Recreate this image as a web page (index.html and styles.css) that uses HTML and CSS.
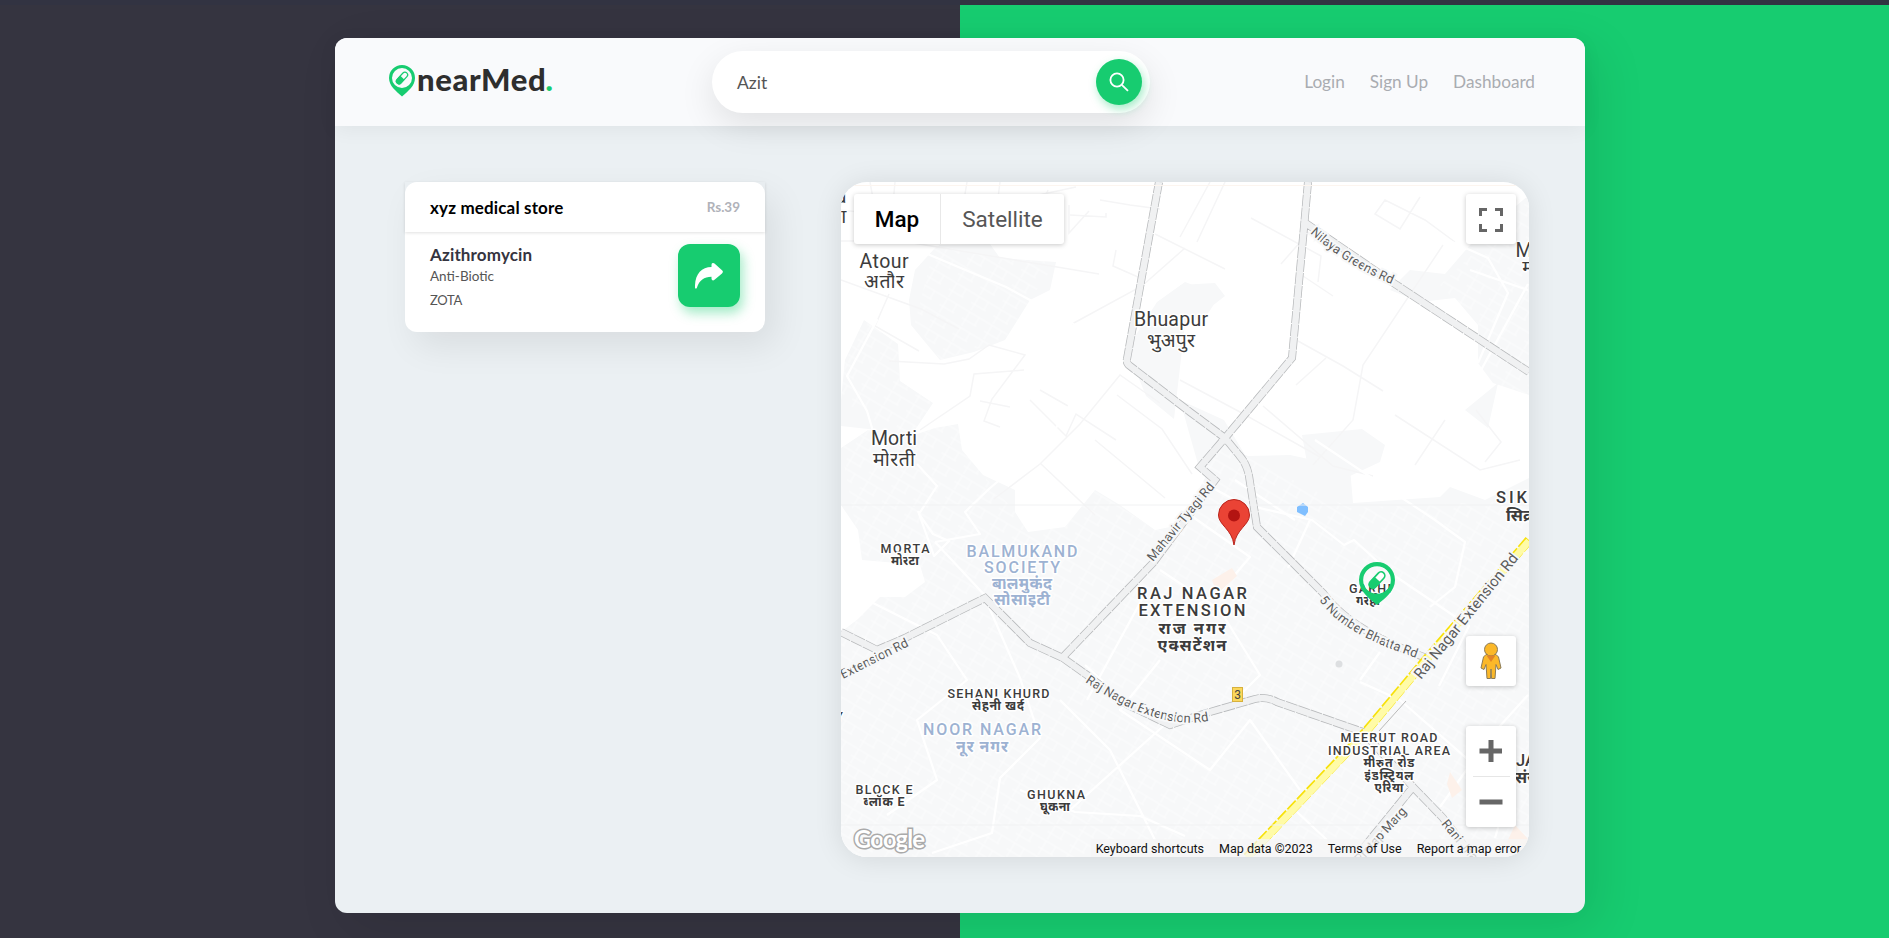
FILE: index.html
```html
<!DOCTYPE html>
<html lang="en">
<head>
<meta charset="utf-8">
<title>nearMed</title>
<link rel="stylesheet" href="styles.css">
</head>
<body>
<div class="page">
<div class="panel">
  <header class="header">
    <a class="logo">
      <svg class="logo-pin" viewBox="0 0 26 32"><path fill="#17cc70" fill-rule="evenodd" d="M13 0a13 13 0 0 1 13 13c0 8-7 13-13 18.500C7 26 0 21 0 13A13 13 0 0 1 13 0zm0 3a10 10 0 1 0 0 20a10 10 0 0 0 0-20z"/><g transform="rotate(43 13 13)"><rect x="10.300" y="6" width="5.400" height="14" rx="2.700" fill="#f9fafc" stroke="#17cc70" stroke-width="1.200"/><path fill="#17cc70" d="M10 12.500h6v5a3 3 0 0 1-6 0z"/></g></svg>
      <span class="logo-text">nearMed<span class="dot">.</span></span>
    </a>
    <div class="search">
      <span class="query">Azit</span>
      <button class="search-btn"><svg viewBox="0 0 20 20" width="20" height="20" fill="none" stroke="#fff" stroke-width="1.800"><circle cx="8" cy="8" r="6.600"/><path d="M12.800 12.800l6.200 6"/></svg></button>
    </div>
    <nav class="nav"><a>Login</a><a>Sign Up</a><a>Dashboard</a></nav>
  </header>
  <main class="main">
    <section class="card">
      <div class="card-head"><h2>xyz medical store</h2><span class="price">Rs.39</span></div>
      <div class="card-body">
        <div class="info"><h3>Azithromycin</h3><p class="kind">Anti-Biotic</p><p class="brand">ZOTA</p></div>
        <button class="go"><svg viewBox="0 0 28 26" width="28" height="26"><path fill="#fff" d="M0 25C-.5 12 6 4 16.500 4V2c0-2 1.500-2.600 3-1.400l7.500 6.600c1.200 1.100 1.200 2 0 3.200l-7.500 6.400c-1.500 1.300-3 .5-3-1.200v-1.800C9 14 4.500 17 1.800 25c-.4.700-1.600.7-1.800 0z"/></svg></button>
      </div>
    </section>
    <section class="map">
      <svg class="canvas" viewBox="841 182 688 675">
        <defs>
          <pattern id="grid" width="26" height="18" patternUnits="userSpaceOnUse" patternTransform="rotate(31)"><path d="M0 2H26M4 2V18M15 2V11M0 11H17" fill="none" stroke="#fff" stroke-width="1"/></pattern>
          <path id="nilaya" d="M1310 233Q1345 265 1394 285"/>
          <path id="mahavir" d="M1153 562L1219 482"/>
          <path id="bhatta" d="M1319 600C1342 632 1382 646 1422 660"/>
          <path id="rajext" d="M1085 682Q1160 733 1212 720"/>
          <path id="rajyellow" d="M1421 680L1524 552"/>
          <path id="extension" d="M843 679L917 642"/>
          <path id="marg" d="M1360 864L1418 800"/>
          <path id="rani" d="M1441 824L1482 874"/>
        </defs>
        <rect x="841" y="182" width="688" height="675" fill="#fff"/>
        <g id="areas" fill="#f7f8f9">
          <path id="town" d="M841 448L868 430 917 434 935 428 958 424 962 450 983 475 1015 490 1015 512 1028 532 1065 527 1095 490 1120 505 1155 530 1180 525 1205 478 1222 445 1248 456 1290 455 1350 468 1353 503 1440 497 1450 487 1485 500 1529 478V857H841V632L858 619 880 597 905 597 925 582 920 565 862 560 858 530 841 505z"/>
          <path d="M841 400L845 360 864 320 898 344 900 381 933 403 907 442 877 430 841 426zM935 248L915 270 909 300 911 325 925 342 940 360 974 352 1005 340 1030 300 1050 290 1056 262 1000 258 990 244 940 245z"/>
          <path d="M1185 282l35 13-13 20-22 9-11 95-28-23-19-47 30-47zM1180 285l35-2 10 13-18 14-27 3zM1390 290L1410 270 1445 274 1470 245 1529 195V395L1493 383 1478 363 1478 325 1455 298 1420 302zM1465 410L1498 383 1488 428zM1180 400l44 20 23 38-32 18-17-12-10-35zM1302 435L1362 429 1385 445 1380 462 1350 476 1308 468z"/>
        </g>
        <path class="blocks" fill="url(#grid)" d="M841 448L868 430 958 424 983 475 1015 512 1065 527 1095 490 1155 530 1222 445 1350 508 1529 500V857H841V632L880 597 920 565 862 560zM841 400l4-40 19-40 34 24 2 37 33 22-26 39zM935 245l65 13 56 4-26 38-25 40-65 20-25-38zM1440 285l89-85v195l-36-12-15-60z"/>
        <g class="fields">
          <path d="M841 210l70 8 80-13 85-18M841 241h60l150 25 48 8M841 280l80 29 38 20M889 294l-14 32 44 25M1100 200l30 5 30 4M1069 205v28l20-22M1070 215l36 2v-4M1116 250l-3 16 25 11M1072 324l70-38 43-38M1155 234l70 35M889 361l55 3 25-5 20-14 36 10-33 44-8 22 16 6M920 430l50-34 4-22 50-4M1030 400l36 36 10-22 40 26M1180 380l60 32 80 45M1210 182l-30 55M1225 182l-28 60M1251 218l70 38-3 26M1281 264l28-32M1303 276l30 20M1298 341l45 25 40 25M1326 358l-30 27M1263 406l70 60 40 10M1420 197l-20 32-25-15 10-14 40 20 30 22M1443 245l-80 120-10 55-40 45M1395 415l85 55 40-10M1445 420l-30 45M1476 410l25 32-16 20M1040 463l55 52M994 499l46-35 40-40 40-49 40 28M870 182l4 22M895 182l-2 22M967 182l-4 24M1000 182l-3 24M1048 190l-5 14M1095 440l70 58M1117 395l45 34 30 45M1010 407l-30-6M1040 390l28 16"/>
        </g>
        <g class="lanes">
          <path d="M906 245l100 42 65 35 35 28 30 22M841 303l36 17-30 56 20 35 8 27 24 26M917 464l20 22-18 28 14 20 16 7-15 15-16-45M935 542l45-8-15-22 25-24 60-50 25-42 15-8M935 542l56 60M1180 470l62 34 70 16 32 25 10-5 35 32 80 54-30 60M1310 520l-22 48M1315 440l120 80 30 22-10 45-25 20M1190 515l60 42-30 35-60 34M1160 570l60 40 40 65-38 38M985 598l35 80 20 60-40 40-8 55-60 20M1060 700l50 50 45 90M1020 790l55 22 65 4 45 20M1070 810l100-90M1147 590l-60 110M1160 660l-40 50 90 60 40-50 50 70M1360 680l20-28M1360 682l40 18 80 70M1297 812l30 28M1440 807l50-70 38-42M1480 760l30 28-15 50M1085 665l55 50M1100 465l50 60 35-10M1443 238l45 20 20 35-30 70M1470 270l58 20M1528 284l-60 110M867 600l70 35 30 45-50 40 20 60-50 35M1235 480l60 40"/>
        </g>
        <g fill="#fdf1ea"><path d="M1212 580l20-12 5 8-20 18zM1450 772l12 18-10 8-5-14zM1515 825l14 15-8 16-14-14z"/></g>
        <path fill="#80bfff" d="M1297 507l6-4 5 4 0 5-3 4-8-4z"/><circle cx="1339" cy="664" r="3.500" fill="#dddfe1"/>
        <g id="roads">
          <g class="case">
            <path d="M1159 182L1127 359Q1126 363 1130 366L1190 412 1225 438 1239 455Q1247 464 1249 476L1257 527 1323 593Q1350 631 1427 658"/>
            <path d="M1308 182L1304 227 1292 358 1225 438 1200 467 1215 480 1153 563 1063 657M1304 222L1392 282 1529 372"/>
            <path d="M841 632L877 650 905 638 985 598 1030 643 1063 658 1087 675 1122 702 1170 725 1203 714 1255 699Q1266 696 1277 702L1363 732 1413 787 1443 818 1473 857M1413 787L1356 857"/>
          </g>
          <g class="core">
            <path d="M1159 182L1127 359Q1126 363 1130 366L1190 412 1225 438 1239 455Q1247 464 1249 476L1257 527 1323 593Q1350 631 1427 658"/>
            <path d="M1308 182L1304 227 1292 358 1225 438 1200 467 1215 480 1153 563 1063 657M1304 222L1392 282 1529 372"/>
            <path d="M841 632L877 650 905 638 985 598 1030 643 1063 658 1087 675 1122 702 1170 725 1203 714 1255 699Q1266 696 1277 702L1363 732 1413 787 1443 818 1473 857M1413 787L1356 857"/>
          </g>
          <path d="M1365 727L1398 690M1379 731L1406 701" fill="none" stroke="#b9b9b9"/>
          <path class="hw-case" d="M1529 540L1423 663 1367 730 1343 756 1247 857"/><path class="hw" d="M1529 541L1423 664 1367 731 1343 757 1247 858"/>
        </g>
        <path d="M841 505H1529M841 825H1529" stroke="#f1f2f3"/><path d="M841 185.500H1529" stroke="#fcf5ef"/>
        <g class="road-label">
          <text><textPath href="#nilaya">Nilaya Greens Rd</textPath></text>
          <text><textPath href="#mahavir">Mahavir Tyagi Rd</textPath></text>
          <text><textPath href="#bhatta">5 Number Bhatta Rd</textPath></text>
          <text><textPath href="#rajext">Raj Nagar Extension Rd</textPath></text>
          <text class="wide"><textPath href="#rajyellow">Raj Nagar Extension Rd</textPath></text>
          <text><textPath href="#extension">Extension Rd</textPath></text>
          <text><textPath href="#marg">Pratap Marg</textPath></text>
          <text><textPath href="#rani">Rani Jha</textPath></text>
        </g>
        <g class="place big">
          <text x="884" y="268" textLength="49">Atour</text><text x="884" y="288" textLength="40">अतौर</text>
          <text x="1171" y="326" textLength="74">Bhuapur</text><text x="1171" y="347" textLength="48">भुअपुर</text>
          <text x="894" y="445" textLength="46">Morti</text><text x="894" y="466" textLength="42">मोरती</text>
          <text x="841" y="203">a</text><text x="838" y="223">ा</text><text x="1524" y="257">M</text><text x="1528" y="274">म</text>
        </g>
        <g class="place small">
          <text x="905" y="552.500" textLength="49">MORTA</text><text class="hi" x="905" y="565" textLength="28">मोरटा</text>
          <text x="998.500" y="697.500" textLength="102">SEHANI KHURD</text><text class="hi" x="998" y="710" textLength="52">सेहनी खर्द</text>
          <text x="884" y="793.500" textLength="57">BLOCK E</text><text class="hi" x="884" y="805.500" textLength="41">ब्लॉक E</text>
          <text x="1056" y="798.500" textLength="58">GHUKNA</text><text class="hi" x="1055" y="810.500" textLength="30">घूकना</text>
          <text x="1370" y="592.500" textLength="42">GARHI</text><text class="hi" x="1368" y="605" textLength="24">गरही</text>
          <text x="1389" y="742" textLength="97">MEERUT ROAD</text><text x="1389" y="754.500" textLength="122">INDUSTRIAL AREA</text><text class="hi" x="1389" y="767" textLength="51">मीरुत रोड</text><text class="hi" x="1389" y="779.500" textLength="49">इंडस्ट्रियल</text><text class="hi" x="1389" y="792" textLength="29">एरिया</text>
          <text x="839" y="721">Y</text>
        </g>
        <g class="place mid">
          <text x="1192" y="598.500" textLength="110">RAJ NAGAR</text><text x="1192" y="616" textLength="107">EXTENSION</text><text class="hi" x="1192" y="634" textLength="67">राज नगर</text><text class="hi" x="1192" y="651" textLength="69">एक्सटेंशन</text>
          <text class="start" x="1496" y="503" textLength="31">SIK</text><text class="start hi" x="1506" y="521">सिक्र</text><text class="start" x="1516" y="766">JA</text><text class="start hi" x="1515" y="783">संज</text>
        </g>
        <g class="place blue">
          <text x="1022" y="556.500" textLength="111">BALMUKAND</text><text x="1022" y="572.500" textLength="76">SOCIETY</text><text class="hi" x="1022" y="588.500" textLength="60">बालमुकंद</text><text class="hi" x="1022" y="605" textLength="56">सोसाइटी</text>
          <text x="982" y="735" textLength="118">NOOR NAGAR</text><text class="hi" x="982" y="751.500" textLength="52">नूर नगर</text>
        </g>
        <rect x="1232.500" y="687.500" width="10" height="14" fill="#fbd75b" stroke="#d7b13c"/><text x="1237.500" y="699" class="shield">3</text>
        <path d="M1234 545C1232 529 1218.500 525 1218.500 515A15.500 15.500 0 0 1 1249.500 515C1249.500 525 1236 529 1234 545z" fill="#ea4335" stroke="#b9231b"/><circle cx="1234" cy="515.500" r="6" fill="#b31412"/>
        <g transform="translate(1359 562) scale(1.385)"><path fill="#17cc70" fill-rule="evenodd" d="M13 0a13 13 0 0 1 13 13c0 8-7 13-13 18C7 26 0 21 0 13A13 13 0 0 1 13 0zm0 3a10 10 0 1 0 0 20a10 10 0 0 0 0-20z"/><g transform="rotate(43 13 13)"><rect x="10.300" y="6" width="5.400" height="14" rx="2.700" fill="#fff" stroke="#17cc70" stroke-width="1.200"/><path fill="#17cc70" d="M10 12.500h6v5a3 3 0 0 1-6 0z"/></g></g>
        <text x="854" y="848" class="google" textLength="71">Google</text>
      </svg>
      <div class="types"><span class="on">Map</span><span class="off">Satellite</span></div>
      <div class="control full"><svg width="24" height="24" fill="none" stroke="#666" stroke-width="3"><path d="M1.500 8V1.500H8M16 1.500h6.500V8M1.500 16v6.500H8M16 22.500h6.500V16"/></svg></div>
      <div class="control peg"><svg width="22" height="38" viewBox="0 0 22 38"><g stroke="#8b7b58" fill="#fbb829"><path d="M6 12.500h10l2.500 2.500 2.500 11-3 1.500-2-5-1 14h-3.500L11 27l-.5 9.500H7l-1-14-2 5L1 26l2.500-11z"/><circle cx="11" cy="7.500" r="6.500"/></g><path fill="#e28328" d="M6.500 13.500h9L11 20z"/></svg></div>
      <div class="control zoom"><svg width="24" height="24"><path fill="#666" d="M9.500 1h5v8.500H23v5h-8.500V23h-5v-8.500H0.500v-5h9z"/></svg><i></i><svg width="24" height="24"><path fill="#666" d="M0.500 9.500h23v5H0.500z"/></svg></div>
      <div class="legal"><span>Keyboard shortcuts</span><span>Map data ©2023</span><span>Terms of Use</span><span>Report a map error</span></div>
    </section>
  </main>
</div>
</div>
</body>
</html>
```
FILE: styles.css
```css
* { box-sizing: border-box; }
body { margin: 0; font-family: Lato, sans-serif; }
h2, h3, p { margin: 0; }
button { border: 0; padding: 0; display: flex; align-items: center; justify-content: center; background: #17cc70; }
.page { height: 938px; overflow: hidden; border-top: 5px solid #323342; padding: 33px 0 0 335px; background: linear-gradient(90deg, #353440 960px, #17cc70 960px); background-origin: border-box; }
.panel { width: 1250px; height: 875px; border-radius: 12px; background: #ebf0f3; box-shadow: 12px 14px 50px rgba(0, 0, 0, .1); }
.header { height: 88px; border-radius: 12px 12px 0 0; background: #f9fafc; display: flex; align-items: center; padding: 0 50px 0 54px; box-shadow: 0 4px 20px rgba(0, 0, 0, .05); }
.logo { display: flex; width: 323px; align-items: flex-start; padding-bottom: 3px; }
.logo-pin { width: 26px; height: 32px; margin-top: 1px; }
.logo-text { font-size: 31px; line-height: 30px; font-weight: 900; color: #2e2e2e; margin-left: 2px; letter-spacing: .65px; }
.dot { color: #17cc70; margin-left: -1px; }
.search { width: 438px; height: 62px; border-radius: 31px; background: #fff; display: flex; align-items: center; justify-content: space-between; padding: 0 8px 0 25px; box-shadow: 0 12px 35px rgba(0, 0, 0, .1); }
.query { font-size: 17.500px; color: #555; }
.search-btn { width: 46px; height: 46px; border-radius: 50%; box-shadow: 2px 4px 10px rgba(23, 204, 112, .4); }
.nav { margin-left: auto; display: flex; gap: 25px; padding-bottom: 2px; font-size: 17.200px; color: #a9acb1; }
.main { display: flex; justify-content: space-between; align-items: flex-start; padding: 56px 56px 0 70px; }
.card { width: 360px; height: 150px; border-radius: 12px; background: #fff; box-shadow: 10px 14px 35px rgba(0, 0, 0, .08); }
.card-head { height: 50px; display: flex; align-items: center; justify-content: space-between; padding: 0 25px; box-shadow: 0 1px 3px rgba(0, 0, 0, .12); }
.card-head h2 { font-size: 17px; letter-spacing: .15px; }
.price { font-size: 13.500px; font-weight: 700; color: #b0b2b9; }
.card-body { display: flex; justify-content: space-between; padding: 12px 25px 0; }
.info h3 { font-size: 17px; line-height: 22px; letter-spacing: .15px; color: #353440; }
.info p { font-size: 13.500px; line-height: 20px; color: #555; }
.info .brand { padding-top: 4px; font-size: 13px; letter-spacing: -.3px; }
.go { width: 62px; height: 63px; border-radius: 12px; box-shadow: 3px 6px 12px rgba(23, 204, 112, .4); }
.map { position: relative; width: 688px; height: 675px; border-radius: 26px; overflow: hidden; box-shadow: 0 2px 28px rgba(0, 0, 0, .1); font-family: Roboto, "Noto Sans", sans-serif; }
.canvas { display: block; width: 688px; height: 675px; }
.blocks { opacity: .6; }
.fields { fill: none; stroke: #f5f5f6; stroke-width: 1.500; }
.lanes { fill: none; stroke: #fff; stroke-width: 2.200; stroke-linejoin: round; }
.case { fill: none; stroke: #b7b9bb; stroke-width: 8; stroke-dasharray: 12 1; }
.core { fill: none; stroke: #f0f1f2; stroke-width: 6.500; }
.hw-case { fill: none; stroke: #f7e10b; stroke-width: 9; stroke-dasharray: 12 2; }
.hw { fill: none; stroke: #fffba7; stroke-width: 7; }
.road-label text { font-size: 12.800px; fill: #5b5b5b; stroke: #f7f8f9; stroke-width: 4px; paint-order: stroke; }
.road-label .wide { font-size: 15px; }
.place text { text-anchor: middle; fill: #3c3c3c; stroke: #fff; stroke-width: 3px; paint-order: stroke; stroke-linejoin: round; }
.place .start { text-anchor: start; }
.place .hi { font-weight: 700; }
.big { font-size: 19.500px; }
.small { font-size: 12.500px; font-weight: 500; }
.mid { font-size: 16.500px; font-weight: 500; }
.blue { font-size: 16px; font-weight: 500; }
.blue text { fill: #9db2d2; }
.shield { font-size: 12px; fill: #444; text-anchor: middle; }
.google { font-family: Lato, sans-serif; font-size: 24px; font-weight: 700; fill: #fff; stroke: #aaa; stroke-width: 3px; paint-order: stroke; }
.types, .control { position: absolute; background: #fff; border-radius: 3px; box-shadow: 0 1px 5px rgba(0, 0, 0, .22); }
.types { left: 13px; top: 12px; width: 210px; height: 50px; display: flex; font-size: 22.500px; line-height: 51px; text-align: center; }
.on { width: 87px; font-weight: 500; color: #000; border-right: 1px solid #e8e8e8; }
.off { width: 123px; color: #565656; }
.control { left: 625px; width: 50px; height: 50px; display: flex; flex-direction: column; align-items: center; justify-content: center; }
.full { top: 12px; }
.full svg { margin-top: 1px; }
.peg { top: 454px; }
.zoom { top: 544px; height: 101px; justify-content: space-between; padding: 13px 0; }
.zoom i { width: 37px; height: 1px; background: #e6e6e6; }
.legal { position: absolute; right: 0; bottom: 0; height: 18px; padding: 0 8px 0 5px; display: flex; gap: 15px; background: rgba(245, 245, 245, .75); font-size: 12.500px; line-height: 19px; white-space: nowrap; color: #111; }
```
